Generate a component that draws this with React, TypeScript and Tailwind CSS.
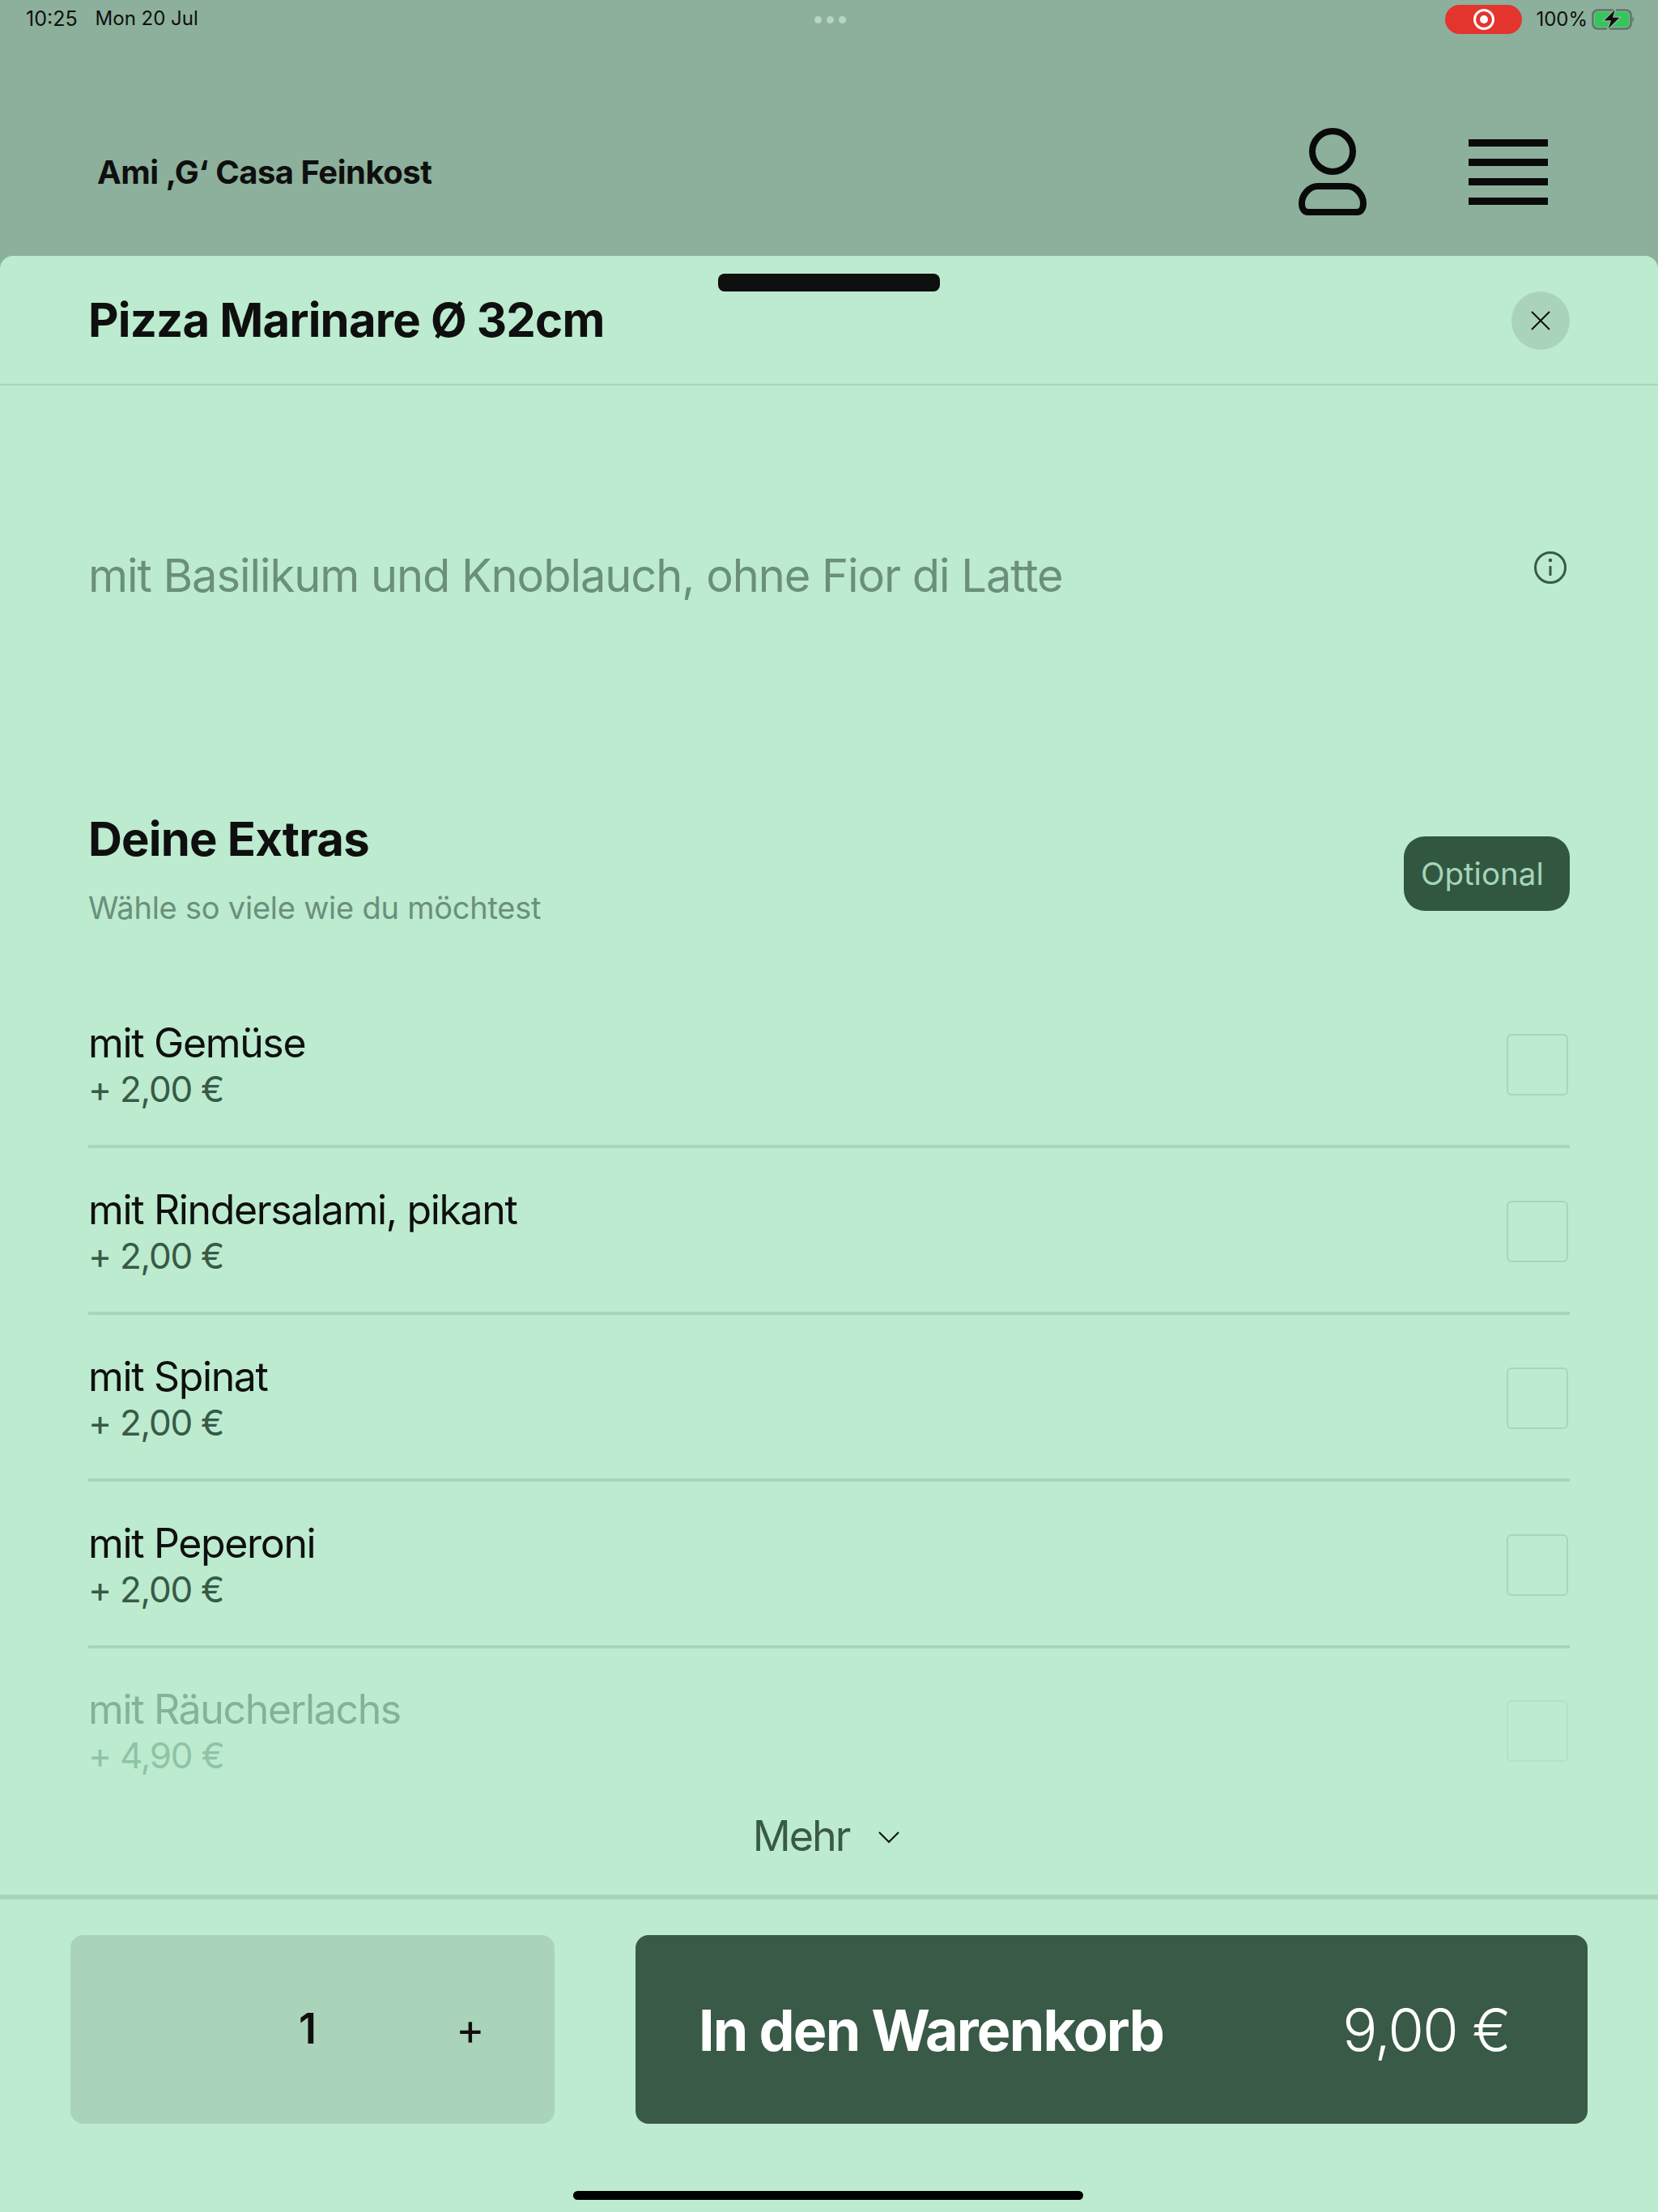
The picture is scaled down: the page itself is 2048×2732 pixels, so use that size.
import React from "react";

const rows = ["mit Gemüse", "mit Rindersalami, pikant", "mit Spinat", "mit Peperoni"];

function Row({ name, price }: { name: string; price: string }) {
  return (
    <div className="h-[206px] border-b-4 border-[#aad4b9] flex items-center justify-between">
      <div className="flex flex-col pt-[2px]">
        <span className="text-[50px] leading-[62px] text-[#0f0f0f] tracking-[-1.35px]">{name}</span>
        <span className="text-[44px] leading-[52px] text-[#385a46] tracking-[-1.25px]">{price}</span>
      </div>
      <div className="w-[76px] h-[76px] mr-[2px] mt-[3px] border-2 border-[#a9d5ba] rounded-[6px]" />
    </div>
  );
}

export default function App() {
  return (
    <div className="relative w-[2048px] h-[2732px] overflow-hidden bg-[#8cb09b] flex flex-col font-['Inter',sans-serif]">
      <div className="h-[316px] shrink-0 flex flex-col">
        <div className="h-[48px] flex items-center justify-between pl-[32px] pr-[28px] text-[24px] text-[#0f0f0f]">
          <div className="w-[500px] flex gap-[22px]">
            <span className="text-[25px]">10:25</span>
            <span>Mon 20 Jul</span>
          </div>
          <div className="flex gap-[6px] mr-[2px]">
            <span className="w-[9px] h-[9px] rounded-full bg-[#b4d6c2]" />
            <span className="w-[9px] h-[9px] rounded-full bg-[#b4d6c2]" />
            <span className="w-[9px] h-[9px] rounded-full bg-[#b4d6c2]" />
          </div>
          <div className="w-[500px] flex items-center justify-end">
            <div className="w-[95px] h-[36px] rounded-full bg-[#e3352e] flex items-center justify-center mr-[17px]">
              <div className="w-[26px] h-[26px] rounded-full border-[3px] border-white flex items-center justify-center">
                <div className="w-[10px] h-[10px] rounded-full bg-white" />
              </div>
            </div>
            <span className="mr-[5px]">100%</span>
            <svg width="54" height="26" viewBox="0 0 54 26">
              <rect x="1.500" y="1.500" width="47" height="23" rx="6" fill="none" stroke="#5c7566" strokeWidth="2.500" />
              <rect x="4" y="4" width="42" height="18" rx="3" fill="#33c65a" />
              <path d="M50.500 9.500c2 .5 2 6.500 0 7z" fill="#5c7566" />
              <path d="M30-1 L14 15 H23 L19 27 L36 10 H27 Z" fill="#0f0f0f" stroke="#8cb09b" strokeWidth="1.500" />
            </svg>
          </div>
        </div>
        <div className="flex-1 flex items-center justify-between pl-[120px] pr-[136px] pt-[60px]">
          <span className="text-[40px] font-bold tracking-[-0.5px] text-[#0f0f0f] mt-[2px]">Ami ‚G‘ Casa Feinkost</span>
          <div className="flex items-center gap-[126px]">
            <svg width="84" height="108" viewBox="0 0 84 108" fill="none" stroke="#0a0a0a" strokeWidth="8">
              <circle cx="42" cy="29" r="25" />
              <path d="M24 72h36c11 0 20 11 20 21c0 7-3 11-8 11H12c-5 0-8-4-8-11c0-10 9-21 20-21Z" />
            </svg>
            <div className="w-[98px] flex flex-col gap-[15px]">
              <div className="h-[9px] bg-[#0a0a0a]" />
              <div className="h-[9px] bg-[#0a0a0a]" />
              <div className="h-[9px] bg-[#0a0a0a]" />
              <div className="h-[9px] bg-[#0a0a0a]" />
            </div>
          </div>
        </div>
      </div>

      <div className="relative flex-1 flex flex-col rounded-t-[16px] bg-[#bcebcf] min-h-0">
        <div className="absolute left-[887px] top-[22px] w-[274px] h-[22px] rounded-[8px] bg-[#0f0f0f]" />
        <div className="h-[160px] shrink-0 border-b-2 border-[#aad4b9] flex items-center justify-between pl-[109px] pr-[109px]">
          <h1 className="text-[58px] font-bold tracking-[-0.8px] text-[#0f0f0f]">Pizza Marinare Ø 32cm</h1>
          <div className="w-[72px] h-[72px] mt-[2px] rounded-full bg-[#aad4b9] flex items-center justify-center">
            <svg width="26" height="26" viewBox="0 0 26 26" stroke="#0f0f0f" strokeWidth="2" fill="none">
              <path d="M2 2 24 24M24 2 2 24" />
            </svg>
          </div>
        </div>

        <div className="px-[109px] flex-1 min-h-0 flex flex-col">
          <div className="h-[525px] shrink-0 flex items-start justify-between pt-[193px]">
            <p className="text-[56px] text-[#6b8f7b] tracking-[-1.05px]">mit Basilikum und Knoblauch, ohne Fior di Latte</p>
            <svg className="mt-[11px] mr-[3px]" width="42" height="42" viewBox="0 0 42 42" fill="none" stroke="#385a46" strokeWidth="3">
              <circle cx="21" cy="21" r="18.500" />
              <path d="M21 19v12" />
              <circle cx="21" cy="12" r="1.500" fill="#385a46" strokeWidth="1.500" />
            </svg>
          </div>

          <div className="h-[211px] shrink-0 flex justify-between items-start">
            <div className="flex flex-col">
              <h2 className="text-[58px] leading-[70px] font-bold tracking-[-0.8px] text-[#0f0f0f]">Deine Extras</h2>
              <span className="mt-[25px] text-[38px] leading-[50px] tracking-[-0.23px] text-[#6b8f7b]">Wähle so viele wie du möchtest</span>
            </div>
            <div className="mt-[32px] w-[205px] h-[92px] rounded-[26px] bg-[#315741] flex items-center pl-[21px] pt-[2px] text-[38.500px] text-[#a6d4ba]">
              Optional
            </div>
          </div>

          <div className="relative flex-1 min-h-0 overflow-hidden">
            {rows.map((r) => (
              <Row key={r} name={r} price="+ 2,00 €" />
            ))}
            <div className="h-[206px] flex items-center justify-between opacity-40">
              <div className="flex flex-col mt-[-4px]">
                <span className="text-[50px] leading-[62px] text-[#385a46] tracking-[-1.35px]">mit Räucherlachs</span>
                <span className="text-[44px] leading-[52px] text-[#4f8a68] tracking-[-1.25px]">+ 4,90 €</span>
              </div>
              <div className="w-[76px] h-[76px] mr-[2px] mt-[-2px] border-2 border-[#a9d5ba] rounded-[6px]" />
            </div>
          </div>
        </div>

        <div className="h-[98px] shrink-0 flex items-start justify-center gap-[35px] mt-[-5px]">
          <span className="text-[52px] leading-[62px] text-[#385a46] tracking-[-2px] ml-[-6px]">Mehr</span>
          <svg className="mt-[24px]" width="28" height="16" viewBox="0 0 28 16" fill="none" stroke="#0f0f0f" strokeWidth="2">
            <path d="M2 2 14 14 26 2" />
          </svg>
        </div>

        <div className="h-[392px] shrink-0 mt-[5px] border-t-[6px] border-[#aad4b9] flex flex-col pt-[44px] px-[87px]">
          <div className="h-[233px] flex justify-between">
            <div className="w-[598px] rounded-[16px] bg-[#aad4b9] flex items-center text-[#0f0f0f]">
              <span className="ml-[282px] w-[100px] text-[52px] font-semibold mb-[2px]">1</span>
              <span className="ml-[94px] text-[54px] mb-[2px]">+</span>
            </div>
            <div className="w-[1176px] rounded-[16px] bg-[#385a46] flex items-center justify-between pl-[78px] pr-[96px] text-white">
              <span className="text-[70px] font-bold tracking-[-1.800px] mt-[2px]">In den Warenkorb</span>
              <span className="text-[72px] font-light tracking-[-1.800px]">9,00 €</span>
            </div>
          </div>
          <div className="mt-[83px] self-center ml-[-2px] w-[630px] h-[11px] rounded-full bg-black" />
        </div>
      </div>
    </div>
  );
}
